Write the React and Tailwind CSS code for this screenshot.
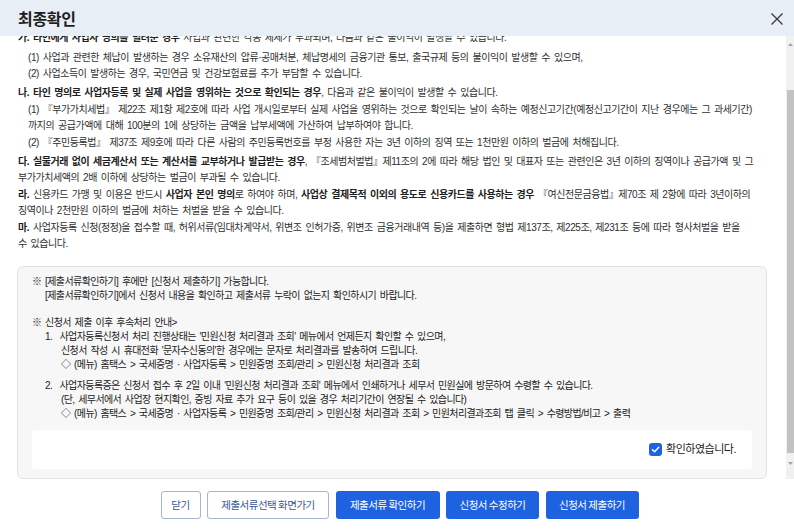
export default function App() {
  const ln = "whitespace-nowrap";
  return (
    <div className="w-[794px] h-[530px] bg-white flex flex-col overflow-hidden text-[#2f2f2f] [font-family:'Liberation_Sans','Noto_Sans_CJK_KR',sans-serif]">
      <header className="h-[36px] shrink-0 bg-[#e8eef6] flex items-center justify-between pl-[18px] pr-[11px] relative z-10">
        <h1 className="text-[16px] font-bold text-[#1e1e1e] tracking-[-0.3px] [font-family:'Noto_Sans_CJK_KR',sans-serif]">최종확인</h1>
        <svg width="12" height="12" viewBox="0 0 12 12" className="mt-[1px]">
          <path d="M0.5 0.5 L11.5 11.5 M11.5 0.5 L0.5 11.5" stroke="#333" strokeWidth="1.2" fill="none" />
        </svg>
      </header>

      <div className="h-[443px] shrink-0 flex">
        <div className="flex-1 overflow-hidden pl-[18px] pr-[19px]">
          <div className="-mt-[6px] text-[10px] leading-[16.5px] tracking-[-0.45px] [word-spacing:1.5px]">
            <div className={`${ln} mb-[3px]`}><b className="text-[#1e1e1e]">가. 타인에게 사업자 명의를 빌려준 경우</b> 사업과 관련한 각종 세제가 부과되며, 다음과 같은 불이익이 발생할 수 있습니다.</div>
            <div className={`${ln} pl-[10px]`}>(1) 사업과 관련한 체납이 발생하는 경우 소유재산의 압류·공매처분, 체납명세의 금융기관 통보, 출국규제 등의 불이익이 발생할 수 있으며,</div>
            <div className={`${ln} pl-[10px] mb-[2.5px]`}>(2) 사업소득이 발생하는 경우, 국민연금 및 건강보험료를 추가 부담할 수 있습니다.</div>

            <div className={ln}><b className="text-[#1e1e1e]">나. 타인 명의로 사업자등록 및 실제 사업을 영위하는 것으로 확인되는 경우</b>, 다음과 같은 불이익이 발생할 수 있습니다.</div>
            <div className={`${ln} pl-[10px]`}>(1) 『부가가치세법』 제22조 제1항 제2호에 따라 사업 개시일로부터 실제 사업을 영위하는 것으로 확인되는 날이 속하는 예정신고기간(예정신고기간이 지난 경우에는 그 과세기간)</div>
            <div className={`${ln} pl-[10px]`}>까지의 공급가액에 대해 100분의 1에 상당하는 금액을 납부세액에 가산하여 납부하여야 합니다.</div>
            <div className={`${ln} pl-[10px] mb-[2.5px]`}>(2) 『주민등록법』 제37조 제9호에 따라 다른 사람의 주민등록번호를 부정 사용한 자는 3년 이하의 징역 또는 1천만원 이하의 벌금에 처해집니다.</div>

            <div className={ln}><b className="text-[#1e1e1e]">다. 실물거래 없이 세금계산서 또는 계산서를 교부하거나 발급받는 경우</b>, 『조세범처벌법』제11조의 2에 따라 해당 법인 및 대표자 또는 관련인은 3년 이하의 징역이나 공급가액 및 그</div>
            <div className={ln}>부가가치세액의 2배 이하에 상당하는 벌금이 부과될 수 있습니다.</div>

            <div className={ln}><b className="text-[#1e1e1e]">라.</b> 신용카드 가맹 및 이용은 반드시 <b className="text-[#1e1e1e]">사업자 본인 명의</b>로 하여야 하며, <b className="text-[#1e1e1e]">사업상 결제목적 이외의 용도로 신용카드를 사용하는 경우</b> 『여신전문금융법』제70조 제 2항에 따라 3년이하의</div>
            <div className={ln}>징역이나 2천만원 이하의 벌금에 처하는 처벌을 받을 수 있습니다.</div>

            <div className={ln}><b className="text-[#1e1e1e]">마.</b> 사업자등록 신청(정정)을 접수할 때, 허위서류(임대차계약서, 위변조 인허가증, 위변조 금융거래내역 등)을 제출하면 형법 제137조, 제225조, 제231조 등에 따라 형사처벌을 받을</div>
            <div className={ln}>수 있습니다.</div>
          </div>

          <div className="mt-[13px] -ml-[1px] border border-[#e3e3e3] rounded-[6px] bg-[#f7f7f7] pl-[14px] pr-[14px] pt-[8px] pb-[9px] text-[10px] leading-[14px] tracking-[-0.6px] [word-spacing:1.5px] text-[#222]">
            <div className={ln}>※ [제출서류확인하기] 후에만 [신청서 제출하기] 가능합니다.</div>
            <div className={`${ln} pl-[13px]`}>[제출서류확인하기]에서 신청서 내용을 확인하고 제출서류 누락이 없는지 확인하시기 바랍니다.</div>
            <div className="h-[13px]" />
            <div className={ln}>※ 신청서 제출 이후 후속처리 안내&gt;</div>
            <div className={`${ln} pl-[13px]`}>1.&nbsp;&nbsp;사업자등록신청서 처리 진행상태는 '민원신청 처리결과 조회' 메뉴에서 언제든지 확인할 수 있으며,</div>
            <div className={`${ln} pl-[29px]`}>신청서 작성 시 휴대전화 '문자수신동의'한 경우에는 문자로 처리결과를 발송하여 드립니다.</div>
            <div className={`${ln} pl-[29px]`}>◇ (메뉴) 홈택스 &gt; 국세증명 · 사업자등록 &gt; 민원증명 조회/관리 &gt; 민원신청 처리결과 조회</div>
            <div className="h-[7px]" />
            <div className={`${ln} pl-[13px]`}>2.&nbsp;&nbsp;사업자등록증은 신청서 접수 후 2일 이내 '민원신청 처리결과 조회' 메뉴에서 인쇄하거나 세무서 민원실에 방문하여 수령할 수 있습니다.</div>
            <div className={`${ln} pl-[29px]`}>(단, 세무서에서 사업장 현지확인, 증빙 자료 추가 요구 등이 있을 경우 처리기간이 연장될 수 있습니다)</div>
            <div className={`${ln} pl-[29px]`}>◇ (메뉴) 홈택스 &gt; 국세증명 · 사업자등록 &gt; 민원증명 조회/관리 &gt; 민원신청 처리결과 조회 &gt; 민원처리결과조회 탭 클릭 &gt; 수령방법/비고 &gt; 출력</div>

            <div className="mt-[9px] h-[39px] bg-white rounded-[3px] flex items-center justify-end pr-[16px] gap-[4px]">
              <span className="w-[13px] h-[13px] rounded-[3px] bg-[#1f62e0] flex items-center justify-center">
                <svg width="9" height="9" viewBox="0 0 10 10">
                  <path d="M1.5 5.2 L4 7.6 L8.6 2.6" stroke="white" strokeWidth="1.6" fill="none" strokeLinecap="round" strokeLinejoin="round" />
                </svg>
              </span>
              <span className="text-[11px] tracking-[-0.5px] text-[#222]">확인하였습니다.</span>
            </div>
          </div>
        </div>

        <div className="w-[8px] bg-[#f1f1f1] flex flex-col items-center">
          <div className="h-[12px] flex items-center justify-center pt-[4px]">
            <svg width="5" height="3" viewBox="0 0 5 3"><path d="M0 3 L2.5 0 L5 3 Z" fill="#a3a3a3" /></svg>
          </div>
          <div className="h-[42px]" />
          <div className="w-[7px] h-[363px] bg-[#c2c2c2]" />
          <div className="flex-1" />
          <div className="h-[20px] flex items-start justify-center pt-[3px]">
            <svg width="5" height="3" viewBox="0 0 5 3"><path d="M0 0 L2.5 3 L5 0 Z" fill="#a3a3a3" /></svg>
          </div>
        </div>
      </div>

      <footer className="flex-1 flex items-center justify-center gap-[6.5px] pl-[5px] text-[10.5px] tracking-[-0.5px] [font-family:'Noto_Sans_CJK_KR',sans-serif]">
        <button className="w-[40px] h-[28px] rounded-[3px] border border-[#a6b5d4] bg-white text-[#3a5796]">닫기</button>
        <button className="w-[122px] h-[28px] rounded-[3px] border border-[#a6b5d4] bg-white text-[#3a5796]">제출서류선택 화면가기</button>
        <button className="w-[104px] h-[28px] rounded-[3px] bg-[#1f62e0] text-white">제출서류 확인하기</button>
        <button className="w-[93px] h-[28px] rounded-[3px] bg-[#1f62e0] text-white">신청서 수정하기</button>
        <button className="w-[93px] h-[28px] rounded-[3px] bg-[#1f62e0] text-white">신청서 제출하기</button>
      </footer>
    </div>
  );
}
